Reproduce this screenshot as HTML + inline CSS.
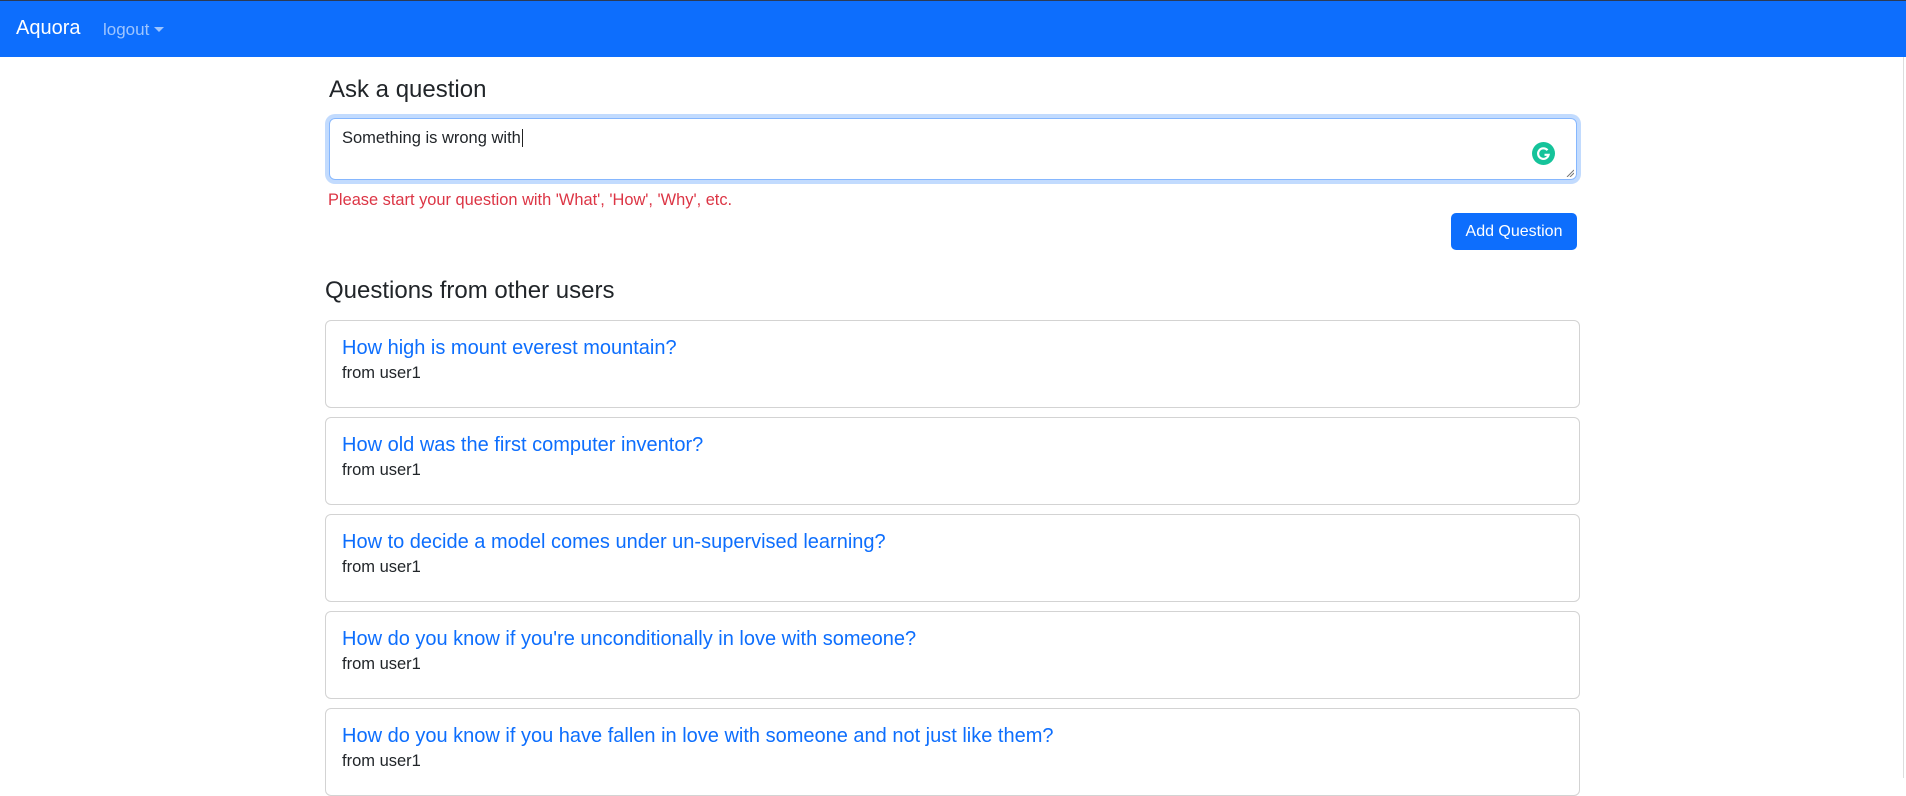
<!DOCTYPE html>
<html><head><meta charset="utf-8"><style>
body{margin:0;width:1906px;height:778px;overflow:hidden;background:#fff;font-family:"Liberation Sans",sans-serif;position:relative}
.nav{position:absolute;left:0;top:0;width:1906px;height:57px;background:#0d6efd;border-top:1px solid #2b3a55;box-sizing:border-box}
.brand{position:absolute;left:16px;top:16px;color:#fff;font-size:20px}
.lo{position:absolute;left:103px;top:19px;color:rgba(255,255,255,.6);font-size:17px}
.lo:after{content:"";display:inline-block;margin-left:5px;vertical-align:3px;border-top:5px solid rgba(255,255,255,.6);border-left:5px solid transparent;border-right:5px solid transparent}
.h{position:absolute;font-size:24px;color:#212529}
.ta{position:absolute;left:329px;top:118px;width:1248px;height:62px;box-sizing:border-box;border:1px solid #86b7fe;border-radius:6px;box-shadow:0 0 0 4px rgba(13,110,253,.25)}
.ta>span{position:absolute;left:12px;top:10px;font-size:16.5px;color:#212529}
.g{position:absolute;left:1532px;top:142px;width:23px;height:23px;border-radius:50%;background:#15c39a}
.err{position:absolute;left:328px;top:191px;color:#dc3545;font-size:16.4px}
.btn{position:absolute;left:1451px;top:213px;width:126px;height:37px;background:#0d6efd;border-radius:5px;color:#fff;font-size:16px;text-align:center;line-height:37px}
.card{position:absolute;left:325px;width:1255px;height:88px;box-sizing:border-box;border:1px solid #d3d3d3;border-radius:6px}
.card .t{position:absolute;left:16px;top:16px;color:#0d6efd;font-size:20px}
.card .u{position:absolute;left:16px;top:43px;color:#212529;font-size:16.5px}
.sb{position:absolute;left:1903px;top:57px;width:1px;height:721px;background:#ddd}
</style></head><body>
<div class="nav"><span class="brand">Aquora</span><span class="lo">logout</span></div>
<div class="h" style="left:329px;top:76px">Ask a question</div>
<div class="ta"><span>Something is wrong with<span style="border-left:1px solid #222;margin-left:1px"></span></span>
<svg style="position:absolute;right:2px;bottom:2px" width="8" height="8" viewBox="0 0 8 8"><path d="M1 8L8 1M4 8L8 4" stroke="#777" stroke-width="1"/></svg></div>
<div class="g"><svg width="23" height="23" viewBox="0 0 23 23"><path d="M15.5 8.2A5.3 5.3 0 1 0 16.6 12.8H12.5" fill="none" stroke="#fff" stroke-width="2.2"/></svg></div>
<div class="err">Please start your question with 'What', 'How', 'Why', etc.</div>
<div class="btn">Add Question</div>
<div class="h" style="left:325px;top:277px">Questions from other users</div>
<div class="card" style="top:320px"><div class="t">How high is mount everest mountain?</div><div class="u">from user1</div></div>
<div class="card" style="top:417px"><div class="t">How old was the first computer inventor?</div><div class="u">from user1</div></div>
<div class="card" style="top:514px"><div class="t">How to decide a model comes under un-supervised learning?</div><div class="u">from user1</div></div>
<div class="card" style="top:611px"><div class="t">How do you know if you're unconditionally in love with someone?</div><div class="u">from user1</div></div>
<div class="card" style="top:708px"><div class="t">How do you know if you have fallen in love with someone and not just like them?</div><div class="u">from user1</div></div>
<div class="sb"></div>
</body></html>
